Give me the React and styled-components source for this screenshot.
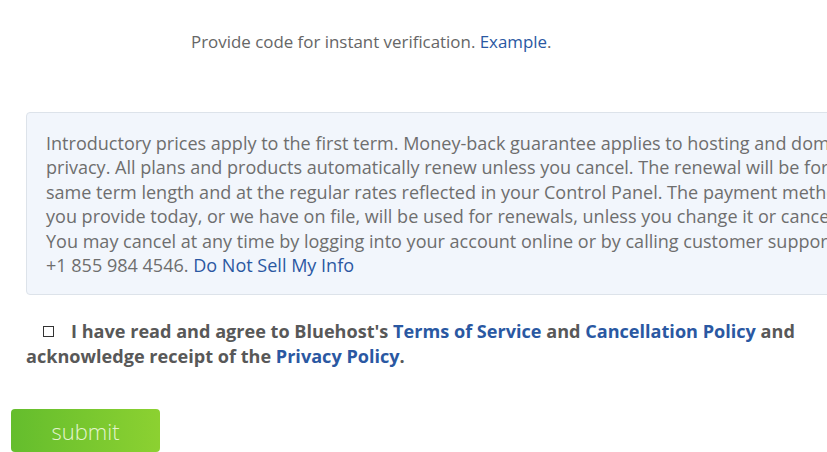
import React from 'react'
import styled, { createGlobalStyle } from 'styled-components'

const Global = createGlobalStyle`
  html, body {
    margin: 0;
    padding: 0;
    background: #fff;
    overflow: hidden;
  }
  body {
    font-family: "Open Sans", "Liberation Sans", sans-serif;
    color: #666;
  }
`

const Page = styled.div`
  width: 827px;
  height: 452px;
  overflow: hidden;
  padding: 0 0 0 26px;
  box-sizing: border-box;
`

const Hint = styled.p`
  margin: 0;
  padding: 30px 0 0 165px;
  font-size: 16.9px;
  line-height: 24px;
  color: #666;
`

const Link = styled.a`
  color: #2a58a2;
  text-decoration: none;
  font-weight: ${p => (p.$bold ? 700 : 'inherit')};
`

const Notice = styled.div`
  margin-top: 58px;
  width: 900px;
  box-sizing: border-box;
  padding: 18px 19px 17px 19px;
  background: #f2f6fc;
  border: 1px solid #dde3ea;
  border-radius: 4px;
  font-size: 18.05px;
  line-height: 24.4px;
  color: #6e6e6e;
  white-space: nowrap;
`

const Agree = styled.div`
  margin-top: 24px;
  font-size: 18.1px;
  font-weight: 700;
  line-height: 25px;
  color: #585858;
`

const Check = styled.span`
  display: inline-block;
  width: 9px;
  height: 9px;
  border: 1px solid #333;
  margin: 0 17px 0 17px;
  vertical-align: 1px;
  line-height: 0;
`

const Submit = styled.button`
  display: block;
  margin: 40px 0 0 -15px;
  width: 149px;
  height: 43px;
  border: none;
  border-radius: 4px;
  background: linear-gradient(to right, #64bd2d, #8cd131);
  color: #e4f4cf;
  font-family: "Open Sans", "Liberation Sans", sans-serif;
  font-weight: 300;
  font-size: 22px;
  padding: 0;
  cursor: pointer;
`

export default function App() {
  return (
    <>
      <Global />
      <Page>
        <Hint>
          Provide code for instant verification. <Link href="#">Example</Link>.
        </Hint>
        <Notice>
          Introductory prices apply to the first term. Money-back guarantee applies to hosting and domain
          <br />
          privacy. All plans and products automatically renew unless you cancel. The renewal will be for the
          <br />
          same term length and at the regular rates reflected in your Control Panel. The payment method
          <br />
          you provide today, or we have on file, will be used for renewals, unless you change it or cancel it.
          <br />
          You may cancel at any time by logging into your account online or by calling customer support at
          <br />
          +1 855 984 4546. <Link href="#">Do Not Sell My Info</Link>
        </Notice>
        <Agree>
          <Check />
          I have read and agree to Bluehost's <Link href="#" $bold>Terms of Service</Link> and{' '}
          <Link href="#" $bold>Cancellation Policy</Link> and
          <br />
          acknowledge receipt of the <Link href="#" $bold>Privacy Policy</Link>.
        </Agree>
        <Submit>submit</Submit>
      </Page>
    </>
  )
}
